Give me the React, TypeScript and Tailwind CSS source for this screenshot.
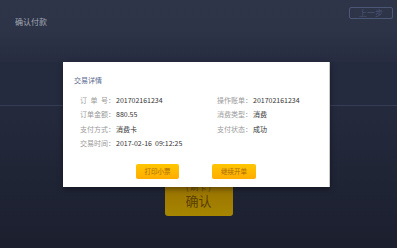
const rowsLeft = [
  { label: '订单号', value: '201702161234' },
  { label: '订单金额', value: '880.55' },
  { label: '支付方式', value: '消费卡' },
  { label: '交易时间', value: '2017-02-16  09:12:25' },
];

const rowsRight = [
  { label: '操作账单', value: '201702161234' },
  { label: '消费类型', value: '消费' },
  { label: '支付状态', value: '成功' },
];

const font = { fontFamily: '"Noto Sans CJK SC", "Liberation Sans", sans-serif' };

const Row = ({ label, value }: { label: string; value: string }) => (
  <div className="flex h-[14.5px] items-center text-[7px] leading-none">
    <span className="w-[28px] flex justify-between text-[#9a9a9a]">
      {label.split('').map((c, i) => (
        <span key={i}>{c}</span>
      ))}
    </span>
    <span className="w-[8px] text-[#9a9a9a]">：</span>
    <span className="whitespace-pre text-[#333]">{value}</span>
  </div>
);

const App = () => {
  return (
    <div
      className="relative w-[397px] h-[248px] overflow-hidden bg-gradient-to-b from-[#2c3349] to-[#1b1f2e]"
      style={font}
    >
      {/* header */}
      <div className="h-[62px] flex items-start justify-between px-[15px] bg-gradient-to-b from-[#2e3549] via-[#2d3448] to-[#272c40]">
        <div className="pt-[16px] text-[8px] text-[#a3a8b4]">确认付款</div>
        <div className="mt-[7px] -mr-[11px] w-[44px] h-[12px] border border-[#4c5677] rounded-[2px] flex items-center justify-center text-[8px] leading-none text-[#4c5677]">
          上一步
        </div>
      </div>
      <div className="h-[43px] bg-[#252b3f]" />
      <div className="h-[1px] bg-[#363d55]" />
      <div className="flex justify-center pt-[40px]">
        <div className="w-[68px] h-[70px] rounded-[3px] bg-gradient-to-b from-[#8a5a00] to-[#a68600] flex flex-col items-center justify-end pb-[9px] text-[#5a4000]">
          <div className="text-[8px] leading-none mb-[3px]">( 刷卡 )</div>
          <div className="text-[13px] leading-none">确认</div>
        </div>
      </div>

      {/* modal */}
      <div className="absolute left-[63px] top-[62px] w-[267px] h-[125px] bg-white border-r border-[#c8c8c8] shadow-[0_2px_6px_rgba(0,0,0,0.4)]">
        <div className="pl-[11px] pt-[15px] text-[7px] leading-none text-[#5b6a8e]">交易详情</div>
        <div className="flex pt-[9px]">
          <div className="pl-[17px] w-[154px]">
            {rowsLeft.map((r) => (
              <Row key={r.label} {...r} />
            ))}
          </div>
          <div>
            {rowsRight.map((r) => (
              <Row key={r.label} {...r} />
            ))}
          </div>
        </div>
        <div className="flex justify-center gap-[33px] pt-[13px]">
          <div className="w-[43px] h-[15px] rounded-[2px] bg-gradient-to-b from-[#ffc600] to-[#ffac00] flex items-center justify-center text-[6.5px] text-[#a86a00]">
            打印小票
          </div>
          <div className="w-[44px] h-[15px] rounded-[2px] bg-gradient-to-b from-[#ffc600] to-[#ffac00] flex items-center justify-center text-[6.5px] text-[#a86a00]">
            继续开单
          </div>
        </div>
      </div>
    </div>
  );
};

export default App;
